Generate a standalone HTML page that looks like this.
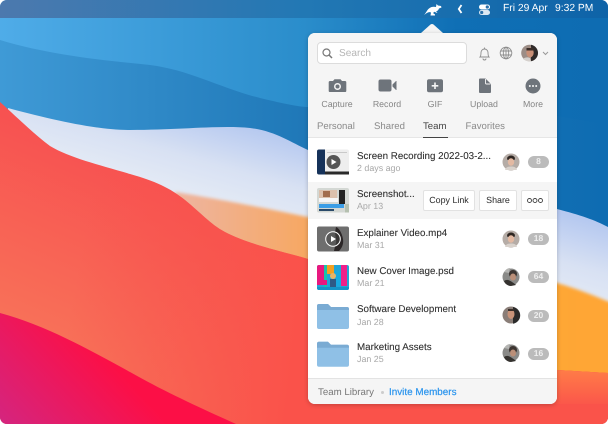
<!DOCTYPE html>
<html><head><meta charset="utf-8"><style>
html,body{margin:0;padding:0;background:#fff}
#r{position:relative;width:608px;height:424px;overflow:hidden;font-family:"Liberation Sans",sans-serif;text-rendering:geometricPrecision}
#r svg.a{position:absolute;left:0;top:0}
.t{position:absolute;white-space:nowrap;line-height:12px}
.n{font-size:9.8px;color:#2f2f2f;-webkit-text-stroke:.1px #2f2f2f}
.d{font-size:8.9px;color:#a8a8a8}
.l{font-size:8.8px;color:#858585;text-align:center}
.tb{font-size:9.6px;color:#8a8a8a}
.b{position:absolute;width:21px;height:11.5px;background:#bbb;border-radius:6px;color:#eee;font-size:8.5px;font-weight:bold;line-height:11.5px;text-align:center;left:528px}
.btn{position:absolute;top:190px;height:21px;background:#fff;border:1px solid #e2e2e2;border-radius:2px;box-sizing:border-box;font-size:8.9px;color:#2a2a2a;text-align:center;line-height:19px}
</style></head><body><div id="r">
<svg class="a" width="608" height="424" viewBox="0 0 608 424">
<defs>
<linearGradient id="g0" x1="0" y1="0" x2="1" y2="0"><stop offset="0" stop-color="#4facE8"/><stop offset=".5" stop-color="#2a8dcb"/><stop offset=".75" stop-color="#0f6fb5"/><stop offset="1" stop-color="#0e6cb2"/></linearGradient>
<linearGradient id="g1" x1="0" y1="0" x2="1" y2="0"><stop offset="0" stop-color="#3f9ad6"/><stop offset=".5" stop-color="#1f78b8"/><stop offset="1" stop-color="#0e6cb2"/></linearGradient>
<linearGradient id="gm" x1="0" y1="0" x2="1" y2="0"><stop offset="0" stop-color="#4c79ae"/><stop offset=".5" stop-color="#2278b4"/><stop offset="1" stop-color="#0e63a8"/></linearGradient>
<linearGradient id="gw" x1="300" y1="140" x2="279" y2="215" gradientUnits="userSpaceOnUse"><stop offset="0" stop-color="#b6c9f0"/><stop offset=".6" stop-color="#d8e1f3"/><stop offset="1" stop-color="#e2e9f5"/></linearGradient>
<linearGradient id="go" x1="190" y1="0" x2="608" y2="0" gradientUnits="userSpaceOnUse"><stop offset="0" stop-color="#efb39a"/><stop offset=".27" stop-color="#f6a864"/><stop offset=".5" stop-color="#fba83c"/><stop offset="1" stop-color="#ffa634"/></linearGradient>
<linearGradient id="gr" x1="150" y1="150" x2="70" y2="340" gradientUnits="userSpaceOnUse"><stop offset="0" stop-color="#f74e50"/><stop offset="1" stop-color="#f87058"/></linearGradient>
<linearGradient id="gr2" x1="70" y1="310" x2="300" y2="350" gradientUnits="userSpaceOnUse"><stop offset="0" stop-color="#f9524c" stop-opacity="0"/><stop offset="1" stop-color="#fa524a" stop-opacity="1"/></linearGradient>
<linearGradient id="gr3" x1="0" y1="370" x2="0" y2="408" gradientUnits="userSpaceOnUse"><stop offset="0" stop-color="#ff7c48"/><stop offset="1" stop-color="#fa534a"/></linearGradient>
<linearGradient id="gp" x1="0" y1="424" x2="90" y2="340" gradientUnits="userSpaceOnUse"><stop offset="0" stop-color="#d4257f"/><stop offset="1" stop-color="#fc0f46"/></linearGradient>
<clipPath id="c"><rect width="608" height="424" rx="7"/></clipPath>
<filter id="bl" x="-5%" y="-5%" width="110%" height="110%"><feGaussianBlur stdDeviation="1.6"/></filter>
<path id="rd" d="M0 102C20 120 35 135 50 146C70 158 100 165 130 174C155 181 170 188 185 200C200 212 210 224 225 232C250 245 285 252 308 259C400 295 500 340 557 370L608 373V424H0Z"/>
</defs>
<g clip-path="url(#c)">
<rect width="608" height="424" fill="url(#g0)"/>
<path d="M0 18H608V130L557 118C500 105 440 100 400 70L300 50C240 33 170 36 100 36S40 30 0 30Z" fill="url(#g0)" opacity=".6"/>
<path d="M0 40C50 55 100 60 150 65C190 70 220 88 260 98C285 104 300 107 308 107H420C480 108 530 110 557 116C580 120 595 122 608 126V300H0Z" fill="url(#g1)"/>
<path d="M8 108C60 122 100 130 130 130C180 130 220 125 250 128C275 131 290 142 308 150C400 175 500 195 557 209C580 215 595 220 608 227V320H0Z" fill="url(#gw)"/>
<path d="M175 192C200 196 240 203 308 217C400 238 500 262 557 283C575 288 595 296 612 303V400H180Z" fill="url(#go)" filter="url(#bl)"/>
<use href="#rd" fill="url(#gr)"/>
<use href="#rd" fill="url(#gr2)"/>
<path d="M540 369L608 373V404H540Z" fill="url(#gr3)"/>
<rect x="540" y="404" width="68" height="20" fill="#fa534a"/>
<path d="M0 313C45 325 90 350 130 372C165 392 205 410 236 424H0Z" fill="url(#gp)"/>
<rect width="608" height="18" fill="url(#gm)"/>
</g>
<path d="M421 33L430.500 24.500Q432 23.500 433.500 24.500L443 33Z" fill="#f5f5f5"/>
<path d="M424 15C426 13 427 10 429 8.500C431 6.500 434 6.500 436 7L436.500 4L438 5.500L441 6L441.500 7.500L439 8.500C438.500 10 437.500 11 436 11.500L437.500 12.500L436.500 12.800L434.500 11.800L433 13L435 14.500V15.500H430.500L431 12.500C429 11.500 427.500 12.500 424 15Z" fill="#fff"/>
<path d="M461.500 5L458.800 9L461.500 13" fill="none" stroke="#fff" stroke-width="1.800"/>
<rect x="479" y="4.500" width="11" height="5" rx="2.500" fill="#fff"/><circle cx="487.300" cy="7" r="1.600" fill="#2a70ab"/>
<rect x="479" y="10" width="11" height="5" rx="2.500" fill="#dbe7f2"/><circle cx="481.700" cy="12.500" r="1.600" fill="#2a70ab"/>
</svg>
<div class="t" style="left:503px;top:3px;font-size:10.300px;color:#fff">Fri 29 Apr</div>
<div class="t" style="left:555px;top:3px;font-size:10.300px;color:#fff">9:32 PM</div>

<div style="position:absolute;left:308px;top:33px;width:249px;height:371px;background:#fff;border-radius:7px;box-shadow:0 1px 5px rgba(0,0,0,.22);overflow:hidden">
<div style="position:absolute;left:0;top:0;width:249px;height:104px;background:#f5f5f5;border-bottom:1px solid #e6e6e6"></div>
<div style="position:absolute;left:0;top:148.500px;width:249px;height:37.500px;background:#f5f5f5"></div>
<div style="position:absolute;left:0;top:345px;width:249px;height:26px;background:#f5f5f5;border-top:1px solid #e3e3e3"></div>
</div>
<div style="position:absolute;left:317px;top:42px;width:150px;height:22px;box-sizing:border-box;background:#fff;border:1px solid #dcdcdc;border-radius:4px"></div>
<div class="t" style="left:339px;top:48px;font-size:10.100px;color:#b5b5b5">Search</div>
<div class="t l" style="left:317px;top:98px;width:40px">Capture</div>
<div class="t l" style="left:367px;top:98px;width:40px">Record</div>
<div class="t l" style="left:415px;top:98px;width:40px">GIF</div>
<div class="t l" style="left:464px;top:98px;width:40px">Upload</div>
<div class="t l" style="left:513px;top:98px;width:40px">More</div>
<div class="t tb" style="left:317px;top:121px">Personal</div>
<div class="t tb" style="left:374px;top:121px">Shared</div>
<div class="t tb" style="left:423px;top:121px;color:#444">Team</div>
<div class="t tb" style="left:465.500px;top:121px">Favorites</div>
<div style="position:absolute;left:423px;top:136.500px;width:24.500px;height:1.500px;background:#444"></div>

<div class="t n" style="left:357px;top:151px">Screen Recording 2022-03-2...</div><div class="t d" style="left:357px;top:162px">2 days ago</div>
<div class="t n" style="left:357px;top:189px">Screenshot...</div><div class="t d" style="left:357px;top:200px">Apr 13</div>
<div class="t n" style="left:357px;top:228px">Explainer Video.mp4</div><div class="t d" style="left:357px;top:239px">Mar 31</div>
<div class="t n" style="left:357px;top:266px">New Cover Image.psd</div><div class="t d" style="left:357px;top:277px">Mar 21</div>
<div class="t n" style="left:357px;top:304px">Software Development</div><div class="t d" style="left:357px;top:316px">Jan 28</div>
<div class="t n" style="left:357px;top:342px">Marketing Assets</div><div class="t d" style="left:357px;top:353px">Jan 25</div>
<div class="btn" style="left:423px;width:52px">Copy Link</div>
<div class="btn" style="left:479px;width:38px">Share</div>
<div class="btn" style="left:521px;width:28px"></div>
<div class="b" style="top:156px">8</div><div class="b" style="top:233px">18</div><div class="b" style="top:271px">64</div><div class="b" style="top:310px">20</div><div class="b" style="top:348px">16</div>
<div class="t" style="left:318px;top:387px;font-size:9.700px;color:#777">Team Library</div>
<div style="position:absolute;left:381px;top:391px;width:3px;height:3px;border-radius:50%;background:#ccc"></div>
<div class="t" style="left:389px;top:387px;font-size:9.900px;color:#2b95ee;-webkit-text-stroke:.2px #2b95ee">Invite Members</div>

<svg class="a" width="608" height="424" viewBox="0 0 608 424">
<defs>
<g id="f"><path d="M317 306a2 2 0 0 1 2-2h9l3 3h16a2 2 0 0 1 2 2v18a2 2 0 0 1-2 2h-28a2 2 0 0 1-2-2z" fill="#8fc0e6"/><path d="M317 306a2 2 0 0 1 2-2h9l3 3h16a2 2 0 0 1 2 2v1H317z" fill="#7aabd3"/></g>
<g id="av1"><circle cx="511" cy="162" r="8.500" fill="#b5aca6"/><path d="M507 158a4.500 4.500 0 0 1 8 0l-.5 2h-7z" fill="#2e2622"/><ellipse cx="511" cy="162" rx="3.200" ry="3.800" fill="#e3b9a2"/><path d="M505 170c1-3 3-3.500 6-3.500s5 .5 6 3.500z" fill="#d9d2cc"/></g>
<g id="av2"><circle cx="511" cy="315" r="8.500" fill="#8a7e78"/><path d="M513 307a8.500 8.500 0 0 1 0 16.800z" fill="#2b2a2a"/><ellipse cx="511" cy="314" rx="3.500" ry="5" fill="#c99379"/><path d="M508 309h6v2h-6z" fill="#3a2f2a"/></g>
<g id="av3"><circle cx="511" cy="353" r="8.500" fill="#8a8a88"/><circle cx="513" cy="350" r="4" fill="#3d3531"/><ellipse cx="513" cy="353" rx="3" ry="3.500" fill="#bb8f78"/><path d="M504 357c3-2 5-1 8 1s3 2 4 3l-5 1c-3 0-6-2-7-5z" fill="#35322f"/><path d="M504 348c2-3 4-4 6-4l-1 5z" fill="#b5b5b3"/></g>
</defs>
<circle cx="326.500" cy="52.500" r="3.500" fill="none" stroke="#777" stroke-width="1.200"/><path d="M329 55l3 3" stroke="#777" stroke-width="1.500"/>
<path d="M480 57c1-1 1-2 1-4.500a3.500 3.500 0 0 1 7 0c0 2.500 0 3.500 1 4.500zM484.500 47.500v1.500M483 58.500a1.500 1.500 0 0 0 3 0" fill="none" stroke="#8d8d8d" stroke-width=".9"/>
<g fill="none" stroke="#8d8d8d" stroke-width=".9"><circle cx="506" cy="53" r="5.800"/><ellipse cx="506" cy="53" rx="2.700" ry="5.800"/><path d="M500.500 51h11M500.500 55h11M506 47v12"/></g>
<circle cx="529.500" cy="53" r="8.300" fill="#9c8d86"/><path d="M531 44.800a8.300 8.300 0 0 1 0 16.400z" fill="#2f2a29"/><ellipse cx="530" cy="52.500" rx="3.700" ry="5" fill="#c98f76"/><path d="M526.500 48h7v2.500h-7z" fill="#3a2d28"/><path d="M523 59c2-2 5-2 7-1l1 3.300c-3 .4-6-.5-8-2.300z" fill="#d5d0cc"/>
<path d="M543 52l2.500 2.500 2.500-2.500" fill="none" stroke="#999" stroke-width="1"/>

<path d="M330 81h3l1.500-1.700h6l1.500 1.700h3a1.300 1.300 0 0 1 1.300 1.300v8.400a1.300 1.300 0 0 1-1.300 1.300h-15a1.300 1.300 0 0 1-1.300-1.300v-8.400a1.300 1.300 0 0 1 1.300-1.300z" fill="#6e747b"/><circle cx="337.500" cy="86.500" r="3.500" fill="#f5f5f5"/><circle cx="337.500" cy="86.500" r="2" fill="#6e747b"/>
<rect x="378.500" y="79.500" width="13" height="12" rx="2" fill="#6e747b"/><path d="M392.500 84.500l3.500-3.500h.5v9h-.5l-3.500-3.500z" fill="#6e747b"/>
<rect x="427" y="79.300" width="16" height="13" rx="2" fill="#6e747b"/><path d="M435 82.500v6.500M431.700 85.800h6.600" stroke="#f5f5f5" stroke-width="1.600"/>
<path d="M480 78.500h5.500l5.500 5.500v8a1 1 0 0 1-1 1h-10a1 1 0 0 1-1-1v-12.500a1 1 0 0 1 1-1z" fill="#6e747b"/><path d="M485.500 79v4a1 1 0 0 0 1 1h4" fill="none" stroke="#f5f5f5" stroke-width=".9"/>
<circle cx="533" cy="86" r="7.500" fill="#6e747b"/><circle cx="529.800" cy="86" r="1" fill="#f5f5f5"/><circle cx="533" cy="86" r="1" fill="#f5f5f5"/><circle cx="536.200" cy="86" r="1" fill="#f5f5f5"/>

<!-- thumb 1 -->
<rect x="317" y="149.500" width="32" height="25" rx="2" fill="#eeeeee"/>
<path d="M319 149.500h6v25h-6a2 2 0 0 1-2-2v-21a2 2 0 0 1 2-2z" fill="#16325a"/>
<rect x="325" y="171.500" width="24" height="3" fill="#2a2a2a"/>
<rect x="327" y="152" width="20" height="1" fill="#c9c9c9"/>
<circle cx="333.500" cy="162" r="7" fill="#555"/><path d="M331.500 159v6l5-3z" fill="#fff"/>
<!-- thumb 2 -->
<rect x="317" y="188" width="32" height="24.500" rx="2" fill="#d4d8d4"/>
<rect x="319" y="190" width="18" height="8" fill="#dcc1ad"/><rect x="323" y="191" width="7" height="6" fill="#a26d4d"/>
<rect x="339" y="190" width="6" height="14" fill="#222"/>
<rect x="319" y="198" width="19" height="4" fill="#f6f6f6"/>
<rect x="319" y="204" width="25" height="4" fill="#3c9ee6"/>
<rect x="319" y="209" width="15" height="2" fill="#2a4a6a"/><rect x="345" y="204" width="4" height="8.500" fill="#b5c0b0"/>
<!-- thumb 3 -->
<rect x="317" y="226.500" width="32" height="25" rx="2" fill="#6e6e6e"/>
<path d="M336 227c3 1 6 6 7 12s-2 10-4 12h-5c1-6 3-8 2-12s-1-8 0-12z" fill="#2b2627"/>
<circle cx="333" cy="239" r="7.300" fill="#444" fill-opacity=".5" stroke="#fff" stroke-width="1"/><path d="M331 236v6l5-3z" fill="#fff"/>
<!-- thumb 4 -->
<clipPath id="c4"><rect x="317" y="265" width="32" height="25" rx="2"/></clipPath>
<g clip-path="url(#c4)"><rect x="317" y="265" width="32" height="25" fill="#21a5d8"/>
<rect x="317" y="265" width="7" height="15" fill="#e8187f"/><rect x="324" y="265" width="3" height="25" fill="#17c4a8"/>
<rect x="317" y="280" width="10" height="5" fill="#e8187f"/><rect x="327" y="265" width="7" height="9" fill="#f4a022"/>
<rect x="341" y="265" width="6" height="21" fill="#ef1f8a"/><rect x="334" y="271" width="7" height="15" fill="#18a9e0"/>
<circle cx="333" cy="276" r="3" fill="#e8b468"/><rect x="330" y="279" width="6" height="9" fill="#2e5a86"/>
<rect x="317" y="287" width="32" height="3" fill="#1594c8"/></g>

<use href="#f"/><use href="#f" y="37.700"/>
<use href="#av1"/><use href="#av1" y="77"/><use href="#av3" y="-76"/><use href="#av2"/><use href="#av3"/>
<g fill="none" stroke="#444" stroke-width=".9"><circle cx="529.500" cy="200.500" r="2"/><circle cx="535" cy="200.500" r="2"/><circle cx="540.500" cy="200.500" r="2"/></g>
</svg>
</div></body></html>
